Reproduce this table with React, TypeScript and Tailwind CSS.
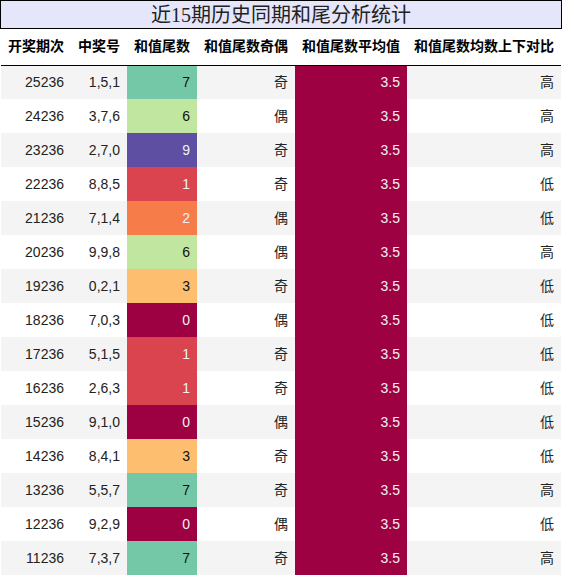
const rows: [string, string, number, string, string][] = [
  ["25236", "1,5,1", 7, "奇", "高"],
  ["24236", "3,7,6", 6, "偶", "高"],
  ["23236", "2,7,0", 9, "奇", "高"],
  ["22236", "8,8,5", 1, "奇", "低"],
  ["21236", "7,1,4", 2, "偶", "低"],
  ["20236", "9,9,8", 6, "偶", "高"],
  ["19236", "0,2,1", 3, "奇", "低"],
  ["18236", "7,0,3", 0, "偶", "低"],
  ["17236", "5,1,5", 1, "奇", "低"],
  ["16236", "2,6,3", 1, "奇", "低"],
  ["15236", "9,1,0", 0, "偶", "低"],
  ["14236", "8,4,1", 3, "奇", "低"],
  ["13236", "5,5,7", 7, "奇", "高"],
  ["12236", "9,2,9", 0, "偶", "低"],
  ["11236", "7,3,7", 7, "奇", "高"],
];

// Spectral-ish colours for tail values
const tailColor: Record<number, string> = {
  0: "bg-[#9e0142] text-[#f1f1f1]",
  1: "bg-[#d9444f] text-[#f1f1f1]",
  2: "bg-[#f67c4a] text-[#f1f1f1]",
  3: "bg-[#fdbf6f] text-[#111]",
  6: "bg-[#c1e6a0] text-[#111]",
  7: "bg-[#74c8a8] text-[#111]",
  9: "bg-[#5e4fa2] text-[#f1f1f1]",
};

const headers = ["开奖期次", "中奖号", "和值尾数", "和值尾数奇偶", "和值尾数平均值", "和值尾数均数上下对比"];

export default function App() {
  return (
    <div className="w-[562px] bg-white font-['Liberation_Sans','Noto_Sans_CJK_SC',sans-serif] text-[#222]">
      <div className="flex h-[29px] items-center justify-center border border-black bg-[#e6e6fa] font-['Liberation_Serif','Noto_Sans_CJK_SC',serif] text-[20px] leading-none text-[#222]">
        近15期历史同期和尾分析统计
      </div>
      <div className="px-px">
        <table className="w-[560px] border-collapse text-[14px]">
          <thead>
            <tr className="h-[36px] border-b border-black">
              {headers.map((h) => (
                <th key={h} className="px-[7px] text-right font-bold text-black">
                  {h}
                </th>
              ))}
            </tr>
          </thead>
          <tbody>
            {rows.map(([issue, nums, tail, odd, cmp], i) => (
              <tr key={issue} className={`h-[34px] ${i % 2 === 0 ? "bg-[#f4f4f4]" : "bg-white"}`}>
                <td className="w-[70px] px-[7px] text-right">{issue}</td>
                <td className="w-[56px] px-[7px] text-right">{nums}</td>
                <td className={`w-[70px] px-[7px] text-right ${tailColor[tail]}`}>{tail}</td>
                <td className="w-[98px] px-[7px] text-right">{odd}</td>
                <td className="w-[112px] bg-[#9e0142] px-[7px] text-right text-[#f1f1f1]">3.5</td>
                <td className="w-[154px] px-[7px] text-right">{cmp}</td>
              </tr>
            ))}
          </tbody>
        </table>
      </div>
    </div>
  );
}
